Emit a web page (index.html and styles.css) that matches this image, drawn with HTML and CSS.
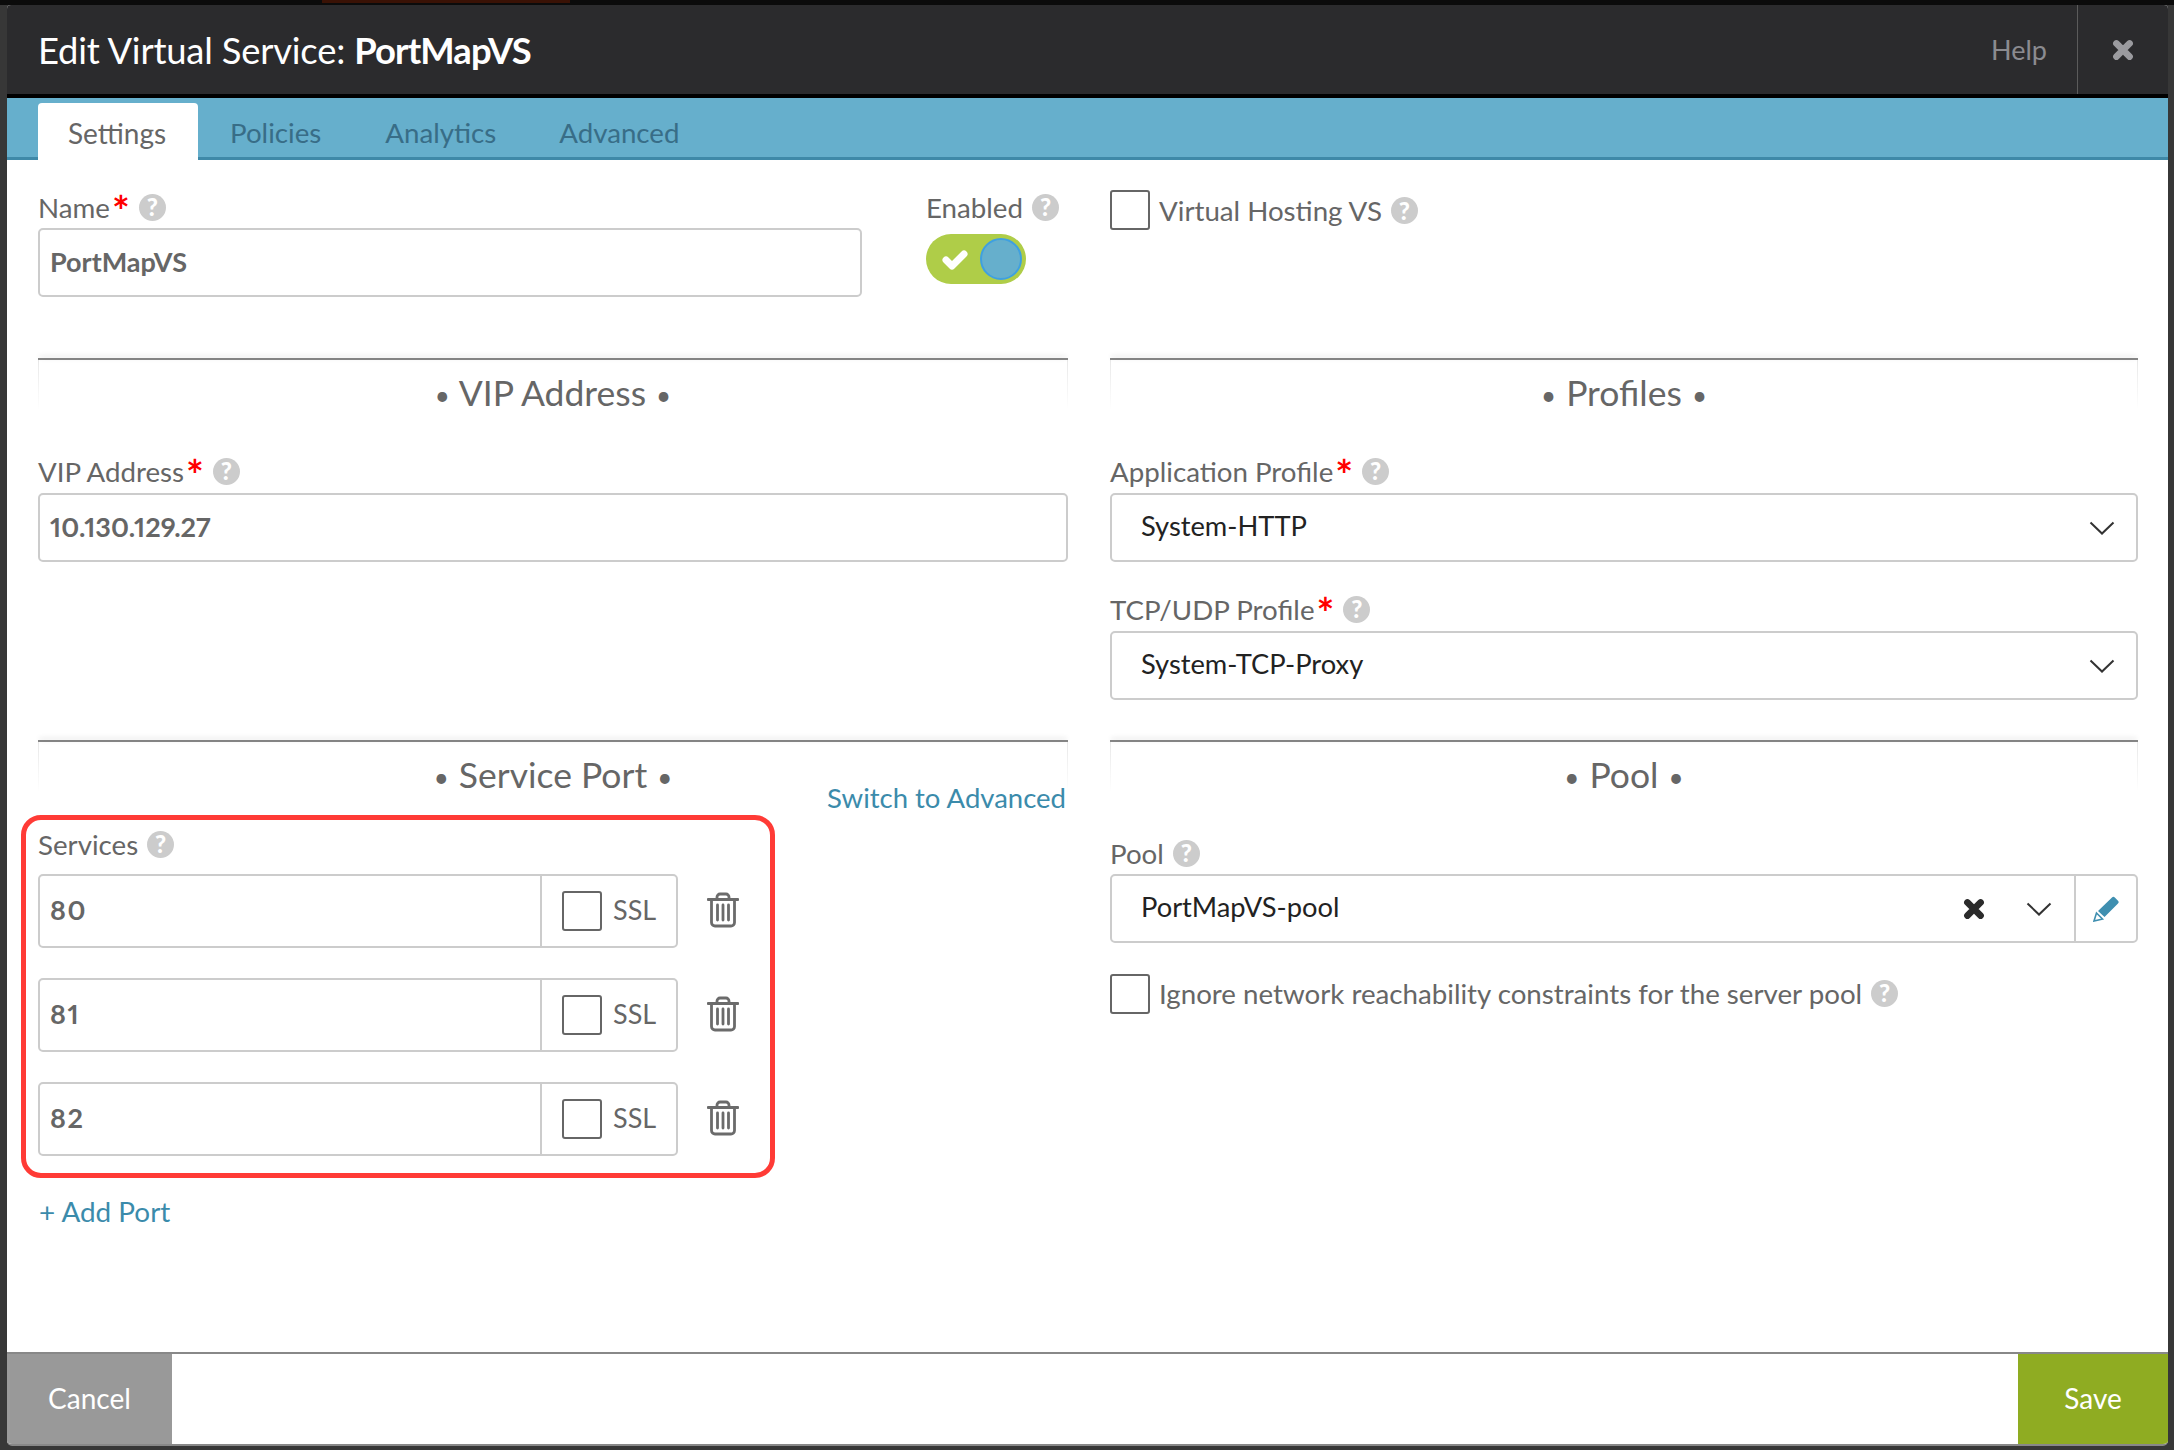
FILE: index.html
```html
<!DOCTYPE html>
<html lang="en">
<head>
<meta charset="utf-8">
<title>Edit Virtual Service</title>
<link rel="stylesheet" href="styles.css">
</head>
<body>
<div class="backdrop-strip"><span class="backdrop-accent"></span></div>
<div class="modal">
  <header class="modal-header">
    <h1 class="modal-title">Edit Virtual Service: <span class="modal-name">PortMapVS</span></h1>
    <span class="help-link">Help</span>
    <span class="close-box">
      <svg class="close-icon" viewBox="0 0 20 20"><path d="M4 4L16 16M16 4L4 16"/></svg>
    </span>
  </header>
  <nav class="tabs">
    <span class="tab tab-active">Settings</span>
    <span class="tab">Policies</span>
    <span class="tab">Analytics</span>
    <span class="tab">Advanced</span>
  </nav>
  <main class="content">
    <section class="top-left">
      <div class="field name-field">
        <label class="label">Name<span class="req">*</span><span class="help">?</span></label>
        <div class="input value">PortMapVS</div>
      </div>
      <div class="field enabled-field">
        <label class="label">Enabled<span class="help help-near">?</span></label>
        <div class="toggle">
          <svg class="toggle-check" viewBox="0 0 26 22"><path d="M4 12L10 18L22 6"/></svg>
          <span class="toggle-knob"></span>
        </div>
      </div>
    </section>
    <section class="top-right">
      <span class="checkbox"></span>
      <span class="check-label">Virtual Hosting VS</span><span class="help help-near">?</span>
    </section>

    <section class="section">
      <h2 class="section-title"><span class="bullet">•</span> VIP Address <span class="bullet">•</span></h2>
      <div class="field">
        <label class="label">VIP Address<span class="req">*</span><span class="help">?</span></label>
        <div class="input value">10.130.129.27</div>
      </div>
    </section>
    <section class="section">
      <h2 class="section-title"><span class="bullet">•</span> Profiles <span class="bullet">•</span></h2>
      <div class="field">
        <label class="label">Application Profile<span class="req">*</span><span class="help">?</span></label>
        <div class="input select"><span class="select-text">System-HTTP</span>
          <svg class="chevron" viewBox="0 0 26 14"><path d="M1.5 1.5L13 12.5L24.5 1.5"/></svg></div>
      </div>
      <div class="field field-next">
        <label class="label">TCP/UDP Profile<span class="req">*</span><span class="help">?</span></label>
        <div class="input select"><span class="select-text">System-TCP-Proxy</span>
          <svg class="chevron" viewBox="0 0 26 14"><path d="M1.5 1.5L13 12.5L24.5 1.5"/></svg></div>
      </div>
    </section>

    <section class="section section-last">
      <div class="section-title section-title-ports">
        <h2 class="section-heading"><span class="bullet">•</span> Service Port <span class="bullet">•</span></h2>
        <a class="switch-link">Switch to Advanced</a>
      </div>
      <div class="services">
        <span class="highlight"></span>
        <label class="label label-services">Services<span class="help help-near">?</span></label>
        <div class="port-row">
          <div class="input port-input"><span class="port-value value">80</span>
            <span class="ssl"><span class="checkbox"></span><span class="ssl-text">SSL</span></span></div>
          <svg class="trash" viewBox="0 0 32 36"><path d="M1 7.5H31M10 7V5a3 3 0 0 1 3-3h6a3 3 0 0 1 3 3v2M4.5 8V30.5a3.5 3.5 0 0 0 3.5 3.5H24a3.5 3.5 0 0 0 3.5-3.5V8M10.5 13V28M16 13V28M21.5 13V28"/></svg>
        </div>
        <div class="port-row">
          <div class="input port-input"><span class="port-value value">81</span>
            <span class="ssl"><span class="checkbox"></span><span class="ssl-text">SSL</span></span></div>
          <svg class="trash" viewBox="0 0 32 36"><path d="M1 7.5H31M10 7V5a3 3 0 0 1 3-3h6a3 3 0 0 1 3 3v2M4.5 8V30.5a3.5 3.5 0 0 0 3.5 3.5H24a3.5 3.5 0 0 0 3.5-3.5V8M10.5 13V28M16 13V28M21.5 13V28"/></svg>
        </div>
        <div class="port-row">
          <div class="input port-input"><span class="port-value value">82</span>
            <span class="ssl"><span class="checkbox"></span><span class="ssl-text">SSL</span></span></div>
          <svg class="trash" viewBox="0 0 32 36"><path d="M1 7.5H31M10 7V5a3 3 0 0 1 3-3h6a3 3 0 0 1 3 3v2M4.5 8V30.5a3.5 3.5 0 0 0 3.5 3.5H24a3.5 3.5 0 0 0 3.5-3.5V8M10.5 13V28M16 13V28M21.5 13V28"/></svg>
        </div>
      </div>
      <a class="add-port">+ Add Port</a>
    </section>
    <section class="section section-last">
      <h2 class="section-title section-title-pool"><span class="bullet">•</span> Pool <span class="bullet">•</span></h2>
      <div class="field">
        <label class="label label-pool">Pool<span class="help help-near">?</span></label>
        <div class="input select pool-select">
          <span class="select-text">PortMapVS-pool</span>
          <svg class="clear-icon" viewBox="0 0 20 20"><path d="M4 4L16 16M16 4L4 16"/></svg>
          <svg class="chevron chevron-pool" viewBox="0 0 26 14"><path d="M1.5 1.5L13 12.5L24.5 1.5"/></svg>
          <span class="edit-box">
            <svg class="pencil" viewBox="0 0 26 26"><path class="pencil-body" d="M5 15L19 1.5a2 2 0 0 1 2.8 0L25 4.7a2 2 0 0 1 0 2.8L11.5 21Z"/><path class="pencil-tip" d="M3.5 17L9.5 23L1 25Z"/></svg>
          </span>
        </div>
      </div>
      <div class="ignore-row">
        <span class="checkbox"></span>
        <span class="check-label">Ignore network reachability constraints for the server pool</span><span class="help help-near">?</span>
      </div>
    </section>
  </main>
  <footer class="modal-footer">
    <button class="btn btn-cancel">Cancel</button>
    <button class="btn btn-save">Save</button>
  </footer>
</div>
</body>
</html>
```
FILE: styles.css
```css
* { box-sizing: border-box; }
html, body { margin: 0; padding: 0; }
body {
  width: 2174px;
  height: 1450px;
  overflow: hidden;
  background: #373737;
  font-family: "Lato", "Liberation Sans", sans-serif;
  color: #666;
}
.backdrop-strip {
  height: 5px;
  background: #0b0b0b;
  padding-left: 322px;
}
.backdrop-accent {
  display: block;
  width: 248px;
  height: 3px;
  background: #3a1205;
}
.modal {
  width: 2161px;
  height: 1441px;
  margin-left: 7px;
  background: #fff;
  display: flex;
  flex-direction: column;
  border-radius: 4px 4px 5px 5px;
  overflow: hidden;
  border-bottom: 2px solid #888;
}
.modal-header {
  height: 93px;
  flex: none;
  display: flex;
  align-items: center;
  background: #2b2b2d;
  border-bottom: 4px solid #000;
  padding-left: 31px;
}
.modal-title {
  margin: 0;
  flex: 1;
  font-size: 36.4px;
  font-weight: 400;
  color: #fff;
  letter-spacing: -0.2px;
}
.modal-name { font-weight: 700; letter-spacing: -0.9px; }
.help-link {
  font-size: 27px;
  color: #8b8b90;
  margin-right: 30px;
}
.close-box {
  width: 91px;
  height: 89px;
  display: flex;
  align-items: center;
  justify-content: center;
  border-left: 1px solid #5b5b5b;
}
.close-icon { width: 22px; height: 22px; }
.close-icon path { fill: none; stroke: #9b9b9f; stroke-width: 6; stroke-linecap: round; }
.tabs {
  height: 62px;
  flex: none;
  display: flex;
  align-items: flex-end;
  background: #66afcc;
  border-bottom: 3px solid #3f89a8;
  padding-left: 31px;
}
.tab {
  height: 51px;
  display: flex;
  align-items: center;
  padding: 2px 32px 0;
  font-size: 27.7px;
  color: #386d87;
}
.tab + .tab + .tab + .tab { margin-left: -1px; }
.tab-active {
  width: 160px;
  height: 57px;
  margin-bottom: -3px;
  padding: 2px 0 0 30px;
  background: #fff;
  color: #666;
  font-size: 28px;
  border-radius: 4px 4px 0 0;
}
.content {
  flex: 1;
  padding: 30px 30px 0 31px;
  display: grid;
  grid-template-columns: 1030px 1028px;
  grid-template-rows: 168px 382px 1fr;
  column-gap: 42px;
}
.top-left {
  display: flex;
  gap: 64px;
  padding-top: 4px;
}
.top-left .label { margin-top: 1px; margin-bottom: 7px; }
.name-field { width: 824px; }
.top-right {
  display: flex;
  align-items: center;
  height: 39px;
}
.top-right .check-label,
.top-right .help { margin-top: 2px; }
.label {
  display: flex;
  align-items: center;
  height: 26px;
  margin-bottom: 8px;
  padding-bottom: 2px;
  font-size: 27.7px;
  color: #666;
  white-space: nowrap;
}
.label-pool { padding-bottom: 0; }
.req {
  color: #f00;
  font-weight: 700;
  font-size: 42px;
  line-height: 26px;
  margin-left: 2px;
  align-self: flex-start;
  margin-top: 3px;
}
.help {
  display: inline-flex;
  align-items: center;
  justify-content: center;
  flex: none;
  width: 27px;
  height: 27px;
  margin-left: 9px;
  border-radius: 50%;
  background: #ccc;
  color: #fff;
  font-size: 24px;
  font-weight: 900;
  line-height: 1;
}
.help-near { margin-left: 9px; }
.input {
  height: 69px;
  border: 2px solid #ccc;
  border-radius: 5px;
  background: #fff;
  display: flex;
  align-items: center;
}
.value {
  font-size: 27px;
  font-weight: 700;
  color: #666;
  padding-left: 10px;
  padding-bottom: 3px;
  font-variant-numeric: proportional-nums;
}
.toggle {
  width: 100px;
  height: 50px;
  margin-top: 13px;
  background: #afcd48;
  border-radius: 25px;
  display: flex;
  align-items: center;
  justify-content: space-between;
  padding: 0 4px 0 16px;
}
.toggle-check { width: 26px; height: 22px; }
.toggle-check path { fill: none; stroke: #fff; stroke-width: 7; stroke-linecap: round; stroke-linejoin: round; }
.toggle-knob {
  width: 42px;
  height: 42px;
  border-radius: 50%;
  background: #66afcc;
  border: 2px solid #3fa0e0;
}
.checkbox {
  display: block;
  flex: none;
  width: 40px;
  height: 40px;
  border: 2px solid #666;
  border-radius: 3px;
  background: #fff;
}
.check-label {
  margin-left: 9px;
  font-size: 27.7px;
  color: #666;
}
.section-title,
.section-heading {
  margin: 0;
  font-size: 35.5px;
  font-weight: 400;
  color: #666;
  text-align: center;
  line-height: 66px;
}
.bullet {
  font-size: 26px;
  vertical-align: 1px;
  margin: 0 1px;
}
.section-title {
  position: relative;
  height: 101px;
  border-top: 2px solid #888;
}
.section-title::before {
  content: "";
  position: absolute;
  top: 0;
  left: 0;
  right: 0;
  height: 50px;
  background:
    linear-gradient(#e8e8e8, #fff) left top / 1px 100% no-repeat,
    linear-gradient(#e8e8e8, #fff) right top / 1px 100% no-repeat;
}
.section-title::after {
  content: "";
  position: absolute;
  top: -2px;
  left: 2px;
  right: 2px;
  height: 0;
  box-shadow: 0 -1px 5px 1px rgba(0, 0, 0, 0.12);
}
.section-title-ports { height: 92px; }
.section-title-pool { height: 100px; }
.switch-link {
  position: absolute;
  right: 2px;
  top: 40px;
  font-size: 27.5px;
  line-height: 32px;
  color: #3b8bab;
}
.select-text {
  font-size: 27.3px;
  color: #222;
  padding-left: 29px;
  padding-bottom: 4px;
  flex: 1;
}
.chevron { width: 26px; height: 14px; margin-right: 21px; flex: none; }
.chevron path { fill: none; stroke: #333; stroke-width: 2; }
.field-next { margin-top: 35px; }
.services {
  position: relative;
}
.highlight {
  position: absolute;
  left: -17px;
  top: -17px;
  width: 754px;
  height: 363px;
  border: 5px solid #ff3b36;
  border-radius: 20px;
}
.label-services { margin-bottom: 16px; }
.port-row {
  display: flex;
  align-items: center;
  height: 74px;
  margin-bottom: 30px;
}
.port-row:last-of-type { margin-bottom: 0; }
.port-input { width: 640px; height: 74px; }
.port-value { flex: 1; letter-spacing: 1.5px; }
.ssl {
  width: 136px;
  height: 100%;
  display: flex;
  align-items: center;
  padding-left: 20px;
  padding-bottom: 1px;
  border-left: 2px solid #ccc;
}
.ssl-text { margin-left: 11px; padding-bottom: 2px; font-size: 27px; color: #666; }
.trash { width: 32px; height: 36px; margin-left: 29px; margin-top: -2px; }
.trash path { fill: none; stroke: #6b6b6b; stroke-width: 2.8; stroke-linecap: round; }
.add-port {
  display: block;
  margin-top: 41px;
  font-size: 27.9px;
  line-height: 28px;
  color: #3b8bab;
  padding-left: 1px;
}
.clear-icon { width: 22px; height: 22px; margin-right: 41px; }
.clear-icon path { fill: none; stroke: #2b2b2b; stroke-width: 6; stroke-linecap: round; }
.chevron-pool { margin-right: 22px; }
.edit-box {
  width: 62px;
  height: 100%;
  display: flex;
  align-items: center;
  justify-content: center;
  border-left: 2px solid #ccc;
}
.pencil { width: 26px; height: 26px; }
.pencil-body { fill: #3f8fb0; }
.pencil-tip { fill: #fff; stroke: #3f8fb0; stroke-width: 1.6; }
.ignore-row {
  display: flex;
  align-items: center;
  margin-top: 31px;
  height: 40px;
}
.ignore-row .check-label,
.ignore-row .help { margin-bottom: 2px; }
.modal-footer {
  height: 92px;
  flex: none;
  display: flex;
  justify-content: space-between;
  border-top: 2px solid #888;
}
.btn {
  height: 100%;
  border: 0;
  padding: 0 0 2px;
  color: #fff;
  font-family: inherit;
  font-size: 28px;
}
.btn-cancel { width: 165px; background: #999; }
.btn-save { width: 150px; background: #8fac22; }
```
